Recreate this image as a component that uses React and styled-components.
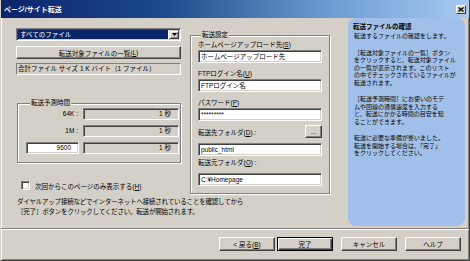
import React from 'react';
import styled, { createGlobalStyle } from 'styled-components';

const Global = createGlobalStyle`
  html, body { margin: 0; padding: 0; background: #d4d0c8; }
  body { font-family: "Liberation Sans", "Noto Sans CJK JP", sans-serif; font-size: 6.5px; color: #000; }
  * { box-sizing: border-box; }
  u { text-decoration: underline; text-underline-offset: 1px; }
`;

const Window = styled.div`
  width: 470px;
  height: 261px;
  background: #d4d0c8;
  display: flex;
  flex-direction: column;
  border-left: 1px solid #d4d0c8;
  border-right: 1px solid #404040;
  border-bottom: 1px solid #404040;
  box-shadow: inset 1px 0 #fff, inset -1px -1px #808080;
  overflow: hidden;
`;

const TitleBar = styled.div`
  flex: 0 0 18px;
  display: flex;
  align-items: center;
  justify-content: space-between;
  padding: 0 3px 0 3px;
  background: linear-gradient(to right, #0a246a 0%, #1e4a8c 35%, #6f9bd2 70%, #a6caf0 100%);
  color: #fff;
  font-weight: bold;
  font-size: 7px;
`;

const CloseBtn = styled.div`
  width: 10px;
  height: 9px;
  background: #d4d0c8;
  border: 1px solid;
  border-color: #fff #404040 #404040 #fff;
  display: flex;
  align-items: center;
  justify-content: center;
`;

const Main = styled.div`
  flex: 0 0 208px;
  display: flex;
`;

const LeftPane = styled.div`
  flex: 1;
  padding: 10px 0 0 15px;
  display: flex;
  flex-direction: column;
`;

const TopRow = styled.div`
  display: flex;
  gap: 9px;
  align-items: flex-start;
`;

const LeftCol = styled.div`
  width: 165px;
  display: flex;
  flex-direction: column;
`;

const sunken = `
  border: 1px solid;
  border-color: #808080 #fff #fff #808080;
  box-shadow: inset 1px 1px #404040, inset -1px -1px #d4d0c8;
`;

const Select = styled.div`
  height: 13px;
  background: #fff;
  display: flex;
  padding: 1px;
  ${sunken}
`;

const SelectValue = styled.div`
  flex: 1;
  margin-right: 1px;
  background: #0a246a;
  color: #fff;
  line-height: 9px;
  padding-left: 2px;
  white-space: nowrap;
`;

const SelectArrow = styled.div`
  width: 10px;
  background: #d4d0c8;
  border: 1px solid;
  border-color: #d4d0c8 #404040 #404040 #d4d0c8;
  box-shadow: inset 1px 1px #fff, inset -1px -1px #808080;
  display: flex;
  align-items: center;
  justify-content: center;
`;

const Button = styled.div`
  height: ${p => p.$h || 13}px;
  width: ${p => (p.$w ? p.$w + 'px' : 'auto')};
  margin-top: ${p => p.$mt || 0}px;
  display: flex;
  align-items: center;
  justify-content: center;
  background: #d4d0c8;
  border: 1px solid;
  border-color: ${p => (p.$default ? '#000' : '#fff #404040 #404040 #fff')};
  box-shadow: ${p =>
    p.$default
      ? 'inset 1px 1px #fff, inset -1px -1px #404040, inset -2px -2px #808080'
      : 'inset -1px -1px #808080, inset 1px 1px #d4d0c8'};
  white-space: nowrap;
  flex-shrink: 0;
`;

const InfoBox = styled.div`
  height: 12px;
  margin-top: 4px;
  border: 1px solid;
  border-color: #808080 #fff #fff #808080;
  line-height: 10px;
  padding-left: 1px;
  white-space: nowrap;
`;

const Group = styled.fieldset`
  margin: ${p => p.$mt}px 0 0 ${p => p.$ml || 0}px;
  width: ${p => p.$w}px;
  min-width: 0;
  border: 1px solid #808080;
  box-shadow: 1px 1px 0 #fff, inset 1px 1px 0 #fff;
  padding: ${p => p.$pad};
  display: flex;
  flex-direction: column;
`;

const Legend = styled.legend`
  padding: 0 1px;
  margin-left: ${p => p.$ml || 4}px;
  line-height: 8px;
  background: #d4d0c8;
  white-space: nowrap;
`;

const TimeRow = styled.div`
  display: grid;
  grid-template-columns: 53px 96px;
  column-gap: 4px;
  height: 12px;
  margin-top: ${p => p.$mt || 0}px;
`;

const RowLabel = styled.div`
  text-align: right;
  line-height: 12px;
  padding-right: 1px;
`;

const Field = styled.div`
  height: ${p => p.$h || 13}px;
  margin-top: ${p => p.$mt || 0}px;
  background: ${p => (p.$disabled ? '#d4d0c8' : '#fff')};
  ${sunken}
  line-height: ${p => (p.$h || 13) - 2}px;
  padding: 0 ${p => (p.$right ? 7 : 2)}px 0 2px;
  text-align: ${p => (p.$right ? 'right' : 'left')};
  white-space: nowrap;
  overflow: hidden;
`;

const CheckRow = styled.div`
  display: flex;
  align-items: center;
  gap: 5px;
  margin-top: 18px;
  padding-left: 5px;
  height: 9px;
  white-space: nowrap;
`;

const CheckBox = styled.div`
  width: 9px;
  height: 9px;
  background: #fff;
  ${sunken}
`;

const Label = styled.div`
  line-height: 10px;
  margin-top: ${p => p.$mt || 0}px;
  white-space: nowrap;
`;

const LabelRow = styled.div`
  display: flex;
  align-items: center;
  justify-content: space-between;
  height: 13px;
  margin-top: ${p => p.$mt || 0}px;
`;

const Note = styled.div`
  margin-top: 3px;
  padding-left: 1px;
  line-height: 10px;
  letter-spacing: -0.2px;
  white-space: nowrap;
`;

const HelpPanel = styled.div`
  width: 117px;
  margin-right: 4px;
  background: #a0c0ea;
  border-radius: 8px;
  padding: 5px 4px 0 5px;
  font-size: 6px;
  line-height: 7.5px;
  white-space: nowrap;
`;

const HelpTitle = styled.div`
  font-weight: bold;
  font-size: 6.5px;
  line-height: 8px;
  margin-bottom: 2px;
`;

const HelpPara = styled.div`
  margin-top: ${p => p.$mt || 0}px;
  padding-left: ${p => p.$pl || 1}px;
`;

const Separator = styled.div`
  margin-top: 2px;
  height: 2px;
  border-top: 1px solid #808080;
  border-bottom: 1px solid #fff;
`;

const ButtonRow = styled.div`
  display: flex;
  justify-content: flex-end;
  margin-top: 7px;
  padding-right: 8px;
`;

const Spacer = styled.div`
  width: ${p => p.$w}px;
  flex-shrink: 0;
`;

export default function App() {
  return (
    <>
      <Global />
      <Window>
        <TitleBar>
          <span>ページ/サイト転送</span>
          <CloseBtn>
            <svg width="6" height="5" viewBox="0 0 6 5">
              <path d="M0.5 0.5 L5.5 4.5 M5.5 0.5 L0.5 4.5" stroke="#000" strokeWidth="1.3" />
            </svg>
          </CloseBtn>
        </TitleBar>
        <Main>
          <LeftPane>
            <TopRow>
              <LeftCol>
                <Select>
                  <SelectValue>すべてのファイル</SelectValue>
                  <SelectArrow>
                    <svg width="5" height="3" viewBox="0 0 5 3">
                      <path d="M0 0 H5 L2.5 3 Z" fill="#000" />
                    </svg>
                  </SelectArrow>
                </Select>
                <Button $mt={5}>
                  転送対象ファイルの一覧(<u>L</u>)
                </Button>
                <InfoBox>合計ファイル サイズ 1 K バイト（1 ファイル）</InfoBox>
                <Group $mt={24} $ml={1} $w={164} $pad="1px 1px 8px 8px">
                  <Legend $ml={4}>転送予測時間</Legend>
                  <TimeRow>
                    <RowLabel>64K :</RowLabel>
                    <Field $h={12} $disabled $right>1 秒</Field>
                  </TimeRow>
                  <TimeRow $mt={5}>
                    <RowLabel>1M :</RowLabel>
                    <Field $h={12} $disabled $right>1 秒</Field>
                  </TimeRow>
                  <TimeRow $mt={5}>
                    <Field $h={12} $right>9600</Field>
                    <Field $h={12} $disabled $right>1 秒</Field>
                  </TimeRow>
                </Group>
                <CheckRow>
                  <CheckBox />
                  <span>次回からこのページのみ表示する(<u>H</u>)</span>
                </CheckRow>
              </LeftCol>
              <Group $mt={3} $w={140} $pad="1px 7px 7px 7px">
                <Legend $ml={3}>転送設定</Legend>
                <Label>ホームページアップロード先(<u>S</u>)</Label>
                <Field>ホームページアップロード先</Field>
                <Label $mt={6}>FTPログイン名(<u>U</u>)</Label>
                <Field>FTPログイン名</Field>
                <Label $mt={6}>パスワード(<u>P</u>)</Label>
                <Field>*********</Field>
                <LabelRow $mt={4}>
                  <span>転送先フォルダ(<u>D</u>) :</span>
                  <Button $w={17}>...</Button>
                </LabelRow>
                <Field $mt={5}>public_html</Field>
                <Label $mt={2}>転送元フォルダ(<u>O</u>) :</Label>
                <Field $mt={5}>C:¥Homepage</Field>
              </Group>
            </TopRow>
            <Note>
              ダイヤルアップ接続などでインターネットへ接続されていることを確認してから
              <br />
              ［完了］ボタンをクリックしてください。転送が開始されます。
            </Note>
          </LeftPane>
          <HelpPanel>
            <HelpTitle>転送ファイルの確認</HelpTitle>
            <HelpPara>転送するファイルの確認をします。</HelpPara>
            <HelpPara $mt={9}>
              ［転送対象ファイルの一覧］ボタン
              <br />
              をクリックすると、転送対象ファイル
              <br />
              の一覧が表示されます。このリスト
              <br />
              の中でチェックされているファイルが
              <br />
              転送されます。
            </HelpPara>
            <HelpPara $mt={9}>
              ［転送予測時間］にお使いのモデ
              <br />
              ムや回線の通信速度を入力する
              <br />
              と、転送にかかる時間の目安を知
              <br />
              ることができます。
            </HelpPara>
            <HelpPara $mt={9}>
              転送に必要な準備が整いました。
              <br />
              転送を開始する場合は、「完了」
              <br />
              をクリックしてください。
            </HelpPara>
          </HelpPanel>
        </Main>
        <Separator />
        <ButtonRow>
          <Button $w={56} $h={14}>
            &lt; 戻る(<u>B</u>)
          </Button>
          <Spacer $w={2} />
          <Button $w={56} $h={14} $default>
            完了
          </Button>
          <Spacer $w={8} />
          <Button $w={56} $h={14}>
            キャンセル
          </Button>
          <Spacer $w={8} />
          <Button $w={56} $h={14}>
            ヘルプ
          </Button>
        </ButtonRow>
      </Window>
    </>
  );
}
